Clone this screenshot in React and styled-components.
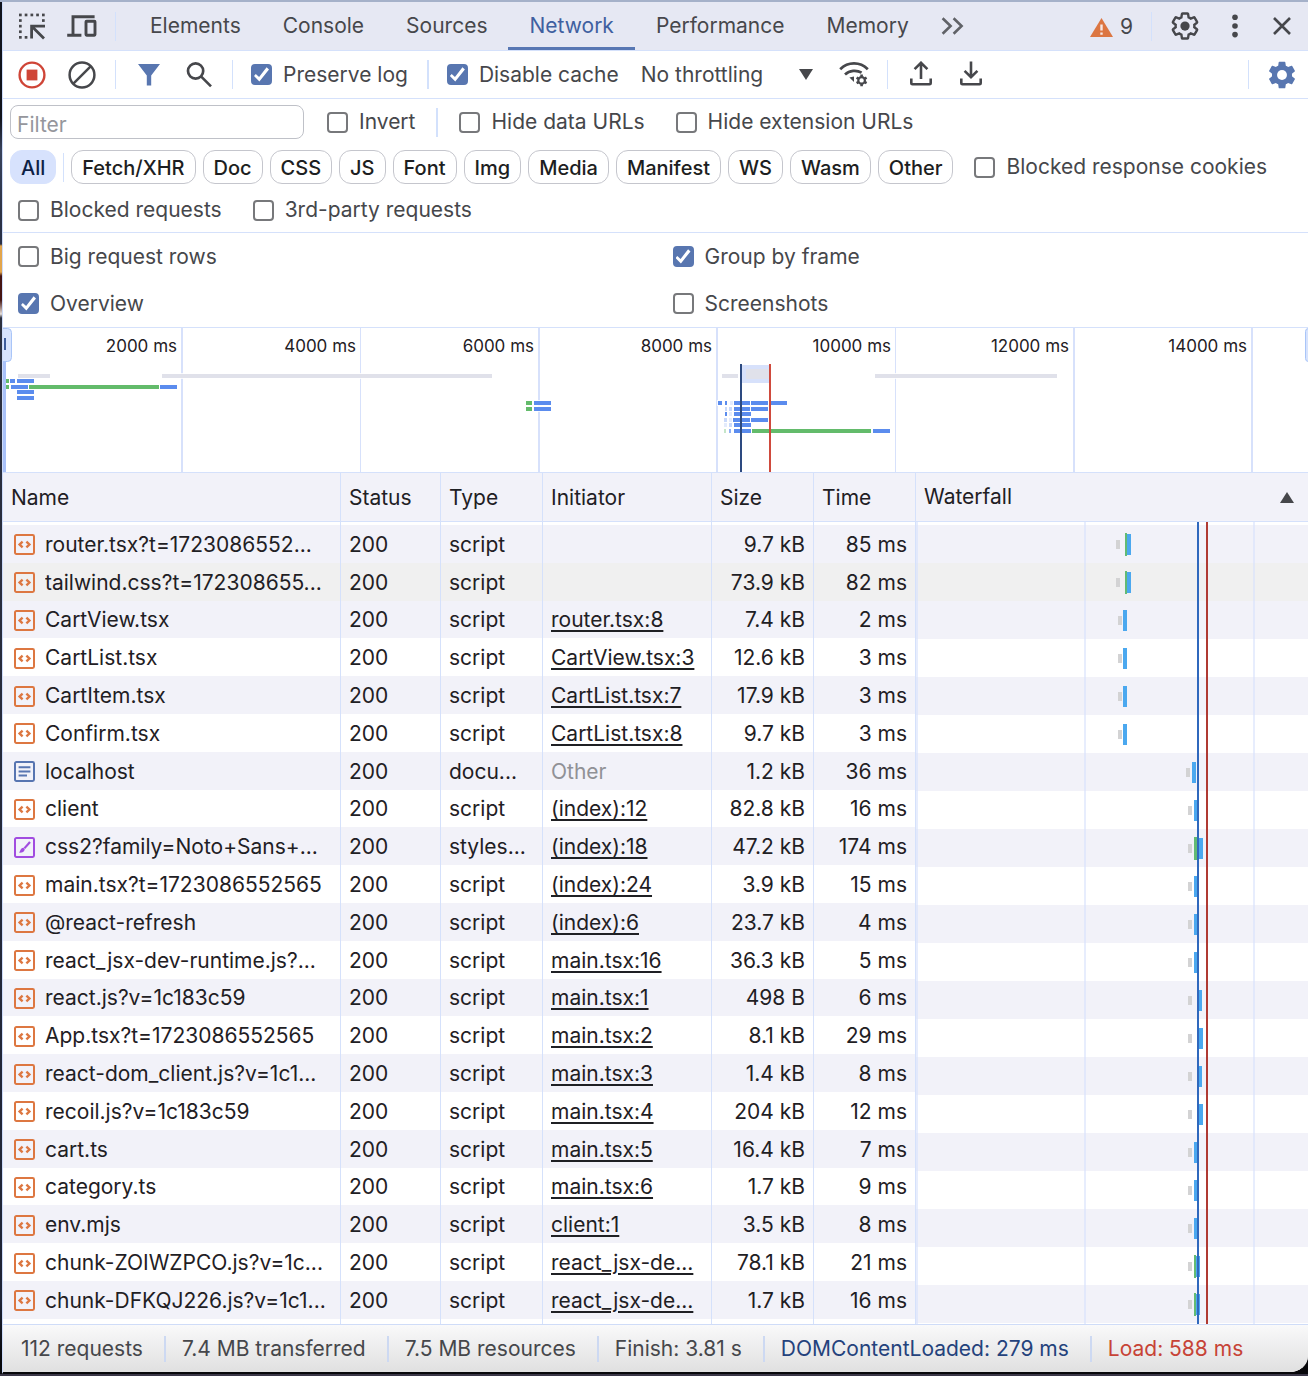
import { useState } from "react";
import styled, { createGlobalStyle } from "styled-components";

const GlobalStyle = createGlobalStyle`
  *, *::before, *::after {
    box-sizing: border-box;
  }
  body {
    margin: 0;
    background: #3a3647;
    font-family: Inter, "Liberation Sans", sans-serif;
    font-size: 21px;
    line-height: 26px;
    color: #46474b;
  }
  button, input, select {
    font: inherit;
    color: inherit;
  }
`;

/* ---------- frame ---------- */

const Desktop = styled.div`
  display: flex;
  flex-direction: column;
  min-height: 100vh;
  padding: 2px 0 2px 2px;
  background: linear-gradient(
    #11131c 0 118px,
    #39435c 150px,
    #2a3146 215px,
    #2a3146 244px,
    #e2a54c 246px 272px,
    #451512 276px 300px,
    #e8e0da 314px,
    #2c3040 318px,
    #1f2436 1300px,
    #07070a 1360px
  );
  box-shadow: inset 0 2px #a5b1c9, inset 0 -2px #3a3647;
`;

const Panel = styled.main`
  flex: 1;
  display: flex;
  flex-direction: column;
  overflow: hidden;
  background: #fff;
  border-left: 1px solid #cddbfa;
  border-bottom: 2px solid #07070a;
  border-bottom-right-radius: 18px;
`;

const Bar = styled.div`
  display: flex;
  align-items: center;
  flex: none;
  border-bottom: 1px solid #d5e1fb;
`;

const Separator = styled.span`
  flex: none;
  width: ${(props) => (props.$wide ? 2 : 1)}px;
  height: 29px;
  margin-left: ${(props) => props.$before || 0}px;
  margin-right: ${(props) => props.$after || 0}px;
  background: #d3e1fc;
`;

const Spacer = styled.span`
  flex: 1;
`;

const IconButton = styled.button`
  flex: none;
  display: flex;
  align-items: center;
  justify-content: center;
  width: ${(props) => props.$width || 50}px;
  height: 44px;
  padding: 0;
  border: 0;
  background: none;
  color: ${(props) => props.$color || "#46474b"};
`;

/* ---------- tab bar ---------- */

const TabBar = styled(Bar)`
  height: 49px;
  padding: 0 4px;
  background: #e6e8f3;
`;

const Tabs = styled.nav`
  display: flex;
  align-self: stretch;
`;

const Tab = styled.button`
  height: 48px;
  padding: 3px 21px 0;
  border: 0;
  border-bottom: 3px solid ${(props) => (props.$active ? "#5877b3" : "transparent")};
  background: none;
  color: ${(props) => (props.$active ? "#3f60a0" : "inherit")};
`;

const Issues = styled.button`
  display: flex;
  align-items: center;
  gap: 7px;
  padding: 2px 0 0;
  border: 0;
  background: none;
`;

/* ---------- toolbar and filters ---------- */

const Toolbar = styled(Bar)`
  height: 48px;
  padding: 0 4px;
`;

const CheckLabel = styled.label`
  display: inline-flex;
  align-items: center;
  gap: 11px;
  white-space: nowrap;
`;

const CheckBox = styled.input.attrs({ type: "checkbox" })`
  appearance: none;
  flex: none;
  display: grid;
  place-items: center;
  width: 21px;
  height: 21px;
  margin: 0;
  border: 2px solid #77787b;
  border-radius: 4px;
  background: #fff;

  &:checked {
    border-color: #5876b0;
    background: #5876b0;
  }

  &:checked::before {
    content: "";
    width: 15px;
    height: 15px;
    background: #fff;
    clip-path: polygon(12% 46%, 0 60%, 36% 96%, 100% 16%, 84% 2%, 34% 66%);
  }
`;

const Throttling = styled.span`
  position: relative;
  display: flex;
  width: 172px;
  margin: 0 9px 0 22px;

  svg {
    position: absolute;
    right: 0;
    top: 7px;
    pointer-events: none;
  }
`;

const Select = styled.select`
  appearance: none;
  width: 100%;
  padding: 0;
  border: 0;
  background: none;
`;

const FilterPane = styled.section`
  flex: none;
  display: flex;
  flex-direction: column;
  gap: 11px;
  padding: 6px 7px 7px;
  border-bottom: 1px solid #d5e1fb;
`;

const FilterRow = styled.div`
  display: flex;
  align-items: center;
  gap: 21px;
`;

const CheckGroup = styled.div`
  display: flex;
  align-items: center;
  gap: 31px;
  height: 30px;
  padding-left: ${(props) => props.$indent || 0}px;
`;

const FilterInput = styled.input`
  width: 294px;
  height: 34px;
  margin-right: 2px;
  padding: 4px 6px 0;
  border: 1px solid #bfc1c8;
  border-radius: 8px;
  outline: 0;
  background: #fff;

  &::placeholder {
    color: #95969c;
    opacity: 1;
  }
`;

const Chips = styled.div`
  display: flex;
  align-items: center;
  gap: 7px;
`;

const Chip = styled.button`
  height: 34px;
  padding: 2px 10px 0;
  border: 1px solid ${(props) => (props.$active ? "#d7e2fd" : "#c5c6cd")};
  border-radius: 12px;
  background: ${(props) => (props.$active ? "#d7e2fd" : "#fff")};
  color: ${(props) => (props.$active ? "#0d1f45" : "#1d1e21")};
  font-size: 20px;
  font-weight: 500;
`;

const SettingsPane = styled.section`
  flex: none;
  display: grid;
  grid-template-columns: 1fr 1fr;
  grid-auto-rows: 47px;
  column-gap: 4px;
  border-bottom: 1px solid #d5e1fb;

  label {
    padding-left: 15px;
  }
`;

/* ---------- overview ---------- */

const Overview = styled.svg`
  flex: none;
  display: block;
  width: 100%;
  height: 145px;
  border-bottom: 1px solid #d5e1fb;

  text {
    font-size: 17px;
    fill: #1f2024;
    text-anchor: end;
  }
`;

/* ---------- request grid ---------- */

const Grid = styled.section`
  flex: 1;
  display: flex;
`;

const TablePane = styled.div`
  flex: 1;
  min-width: 0;
`;

const Table = styled.table`
  width: 100%;
  height: 100%;
  table-layout: fixed;
  border-collapse: separate;
  border-spacing: 0;
  color: #1f2024;
`;

const HeadCell = styled.th`
  height: 49px;
  padding: 2px 8px 0;
  border-right: 1px solid #d5e1fb;
  border-bottom: 1px solid #d5e1fb;
  background: #f2f2f9;
  font-weight: 400;
  text-align: left;
`;

const Row = styled.tr`
  background: ${(props) =>
    props.$hovered ? "#f0f0f0" : props.$striped ? "#f2f2f9" : "#fff"};
`;

const Filler = styled.tr`
  height: ${(props) => props.$height}px;

  td {
    padding: 0;
  }
`;

const Cell = styled.td`
  padding: 2px 8px 0;
  border-right: 1px solid #d5e1fb;
  overflow: hidden;
  text-overflow: ellipsis;
  white-space: nowrap;
  text-align: ${(props) => (props.$numeric ? "right" : "left")};
  color: ${(props) => (props.$muted ? "#909196" : "inherit")};

  a {
    color: inherit;
    text-decoration-thickness: 2px;
    text-underline-offset: 3px;
  }
`;

const FileName = styled.div`
  display: flex;
  align-items: center;
  gap: 10px;
  padding-left: 3px;

  svg {
    flex: none;
  }

  span {
    overflow: hidden;
    text-overflow: ellipsis;
  }
`;

const WaterfallPane = styled.div`
  flex: 0 0 392px;
  display: flex;
  flex-direction: column;
`;

const WaterfallHead = styled.button`
  display: flex;
  align-items: center;
  justify-content: space-between;
  height: 49px;
  padding: 0 14px 0 8px;
  border: 0;
  border-bottom: 1px solid #d5e1fb;
  background: #f2f2f9;
  color: #1f2024;
`;

const WaterfallChart = styled.svg`
  display: block;
  width: 100%;
  height: 802px;
`;

/* ---------- status bar ---------- */

const StatusBar = styled.footer`
  flex: none;
  display: flex;
  align-items: center;
  height: 48px;
  padding-left: 2px;
  border-top: 1px solid #cfdcf8;
  background: linear-gradient(#f9f9fa, #e0e0e0);
`;

const StatusItem = styled.span`
  padding: 0 21px 0 16px;
  white-space: nowrap;
  color: ${(props) => props.$color || "inherit"};

  & + & {
    border-left: 2px solid #cdd9f2;
  }
`;

/* ---------- icons ---------- */

const GEAR =
  "M19.43 12.98c.04-.32.07-.64.07-.98 0-.34-.03-.66-.07-.98l2.11-1.65c.19-.15.24-.42.12-.64l-2-3.46a.5.5 0 0 0-.61-.22l-2.49 1c-.52-.4-1.08-.73-1.69-.98l-.38-2.65A.488.488 0 0 0 14 2h-4c-.25 0-.46.18-.49.42l-.38 2.65c-.61.25-1.17.59-1.69.98l-2.49-1a.566.566 0 0 0-.18-.03c-.17 0-.34.09-.43.25l-2 3.46c-.13.22-.07.49.12.64l2.11 1.65c-.04.32-.07.65-.07.98 0 .33.03.66.07.98l-2.11 1.65c-.19.15-.24.42-.12.64l2 3.46a.5.5 0 0 0 .61.22l2.49-1c.52.4 1.08.73 1.69.98l.38 2.65c.03.24.24.42.49.42h4c.25 0 .46-.18.49-.42l.38-2.65c.61-.25 1.17-.59 1.69-.98l2.49 1c.06.02.12.03.18.03.17 0 .34-.09.43-.25l2-3.46c.12-.22.07-.49-.12-.64z";

const INSPECT_DOTS = [
  [1, 1.6], [6.7, 1.6], [12.5, 1.6], [18.2, 1.6], [24, 1.6],
  [1, 7.2], [1, 12.8], [1, 18.4], [1, 24], [6.7, 24], [24, 7.2],
];

const InspectIcon = () => (
  <svg width="28" height="28" fill="currentColor">
    {INSPECT_DOTS.map(([x, y]) => (
      <rect key={`${x}-${y}`} x={x} y={y} width="2.7" height="2.7" />
    ))}
    <path
      d="M27 14.2H13.6V26.5M14 14.6L26 26.4"
      fill="none"
      stroke="currentColor"
      strokeWidth="2.8"
    />
  </svg>
);

const DevicesIcon = () => (
  <svg width="32" height="28" fill="none" stroke="currentColor" strokeWidth="2.9">
    <path d="M7 23V4.8H28.6M1.2 23.2H15.4" />
    <rect x="20" y="9.2" width="9" height="14" rx="0.6" />
  </svg>
);

const RecordIcon = () => (
  <svg width="28" height="28">
    <circle cx="14" cy="14" r="12.4" fill="none" stroke="#cf4537" strokeWidth="2.4" />
    <rect x="8.6" y="8.6" width="10.8" height="10.8" fill="#cf4537" />
  </svg>
);

const ClearIcon = () => (
  <svg width="28" height="28" fill="none" stroke="currentColor" strokeWidth="2.5">
    <circle cx="14" cy="14" r="12.4" />
    <path d="M5.4 22.6L22.6 5.4" />
  </svg>
);

const FilterIcon = () => (
  <svg width="22" height="22" fill="currentColor">
    <path d="M0 0H22L13.2 11.4V21.6H8.8V11.4Z" />
  </svg>
);

const SearchIcon = () => (
  <svg width="26" height="26" fill="none" stroke="currentColor" strokeWidth="2.7">
    <circle cx="9.6" cy="9" r="7.6" />
    <path d="M15 14.4L25 24.4" />
  </svg>
);

const MoreTabsIcon = () => (
  <svg width="24" height="18" fill="none" stroke="#606267" strokeWidth="2.6">
    <path d="M1.6 1.2L9.6 9L1.6 16.8M12.6 1.2L20.6 9L12.6 16.8" />
  </svg>
);

const WarningIcon = () => (
  <svg width="23" height="19">
    <path d="M11.5 0L23 19H0Z" fill="#dc7642" />
    <path d="M11.5 6.6V12.6M11.5 14.4V16.8" stroke="#f6e9e6" strokeWidth="2.4" />
  </svg>
);

const SettingsIcon = () => (
  <svg width="30" height="30" viewBox="0 0 24 24">
    <path d={GEAR} fill="none" stroke="currentColor" strokeWidth="1.9" />
    <circle cx="12" cy="12" r="3.7" fill="currentColor" />
  </svg>
);

const SettingsFilledIcon = () => (
  <svg width="32" height="32" viewBox="0 0 24 24">
    <path d={GEAR} fill="currentColor" />
    <circle cx="12" cy="12" r="3.7" fill="#fff" />
  </svg>
);

const KebabIcon = () => (
  <svg width="6" height="24" fill="currentColor">
    <circle cx="3" cy="3.2" r="2.8" />
    <circle cx="3" cy="12" r="2.8" />
    <circle cx="3" cy="20.6" r="2.8" />
  </svg>
);

const CloseIcon = () => (
  <svg width="18" height="18" stroke="currentColor" strokeWidth="2.6">
    <path d="M1 1L17 17M17 1L1 17" />
  </svg>
);

const NetworkConditionsIcon = () => (
  <svg width="30" height="28" fill="none" stroke="currentColor" strokeWidth="2.7">
    <path d="M1.2 8.2C9 0.4 21 0.4 28.8 8.2" />
    <path d="M6 13.6C10.6 9.2 17.6 8.8 22.6 11.6" />
    <path d="M10.4 16.4L15 15.4V21Z" fill="currentColor" stroke="none" />
    <circle cx="22.6" cy="19.4" r="3.3" strokeWidth="2.2" />
    <path
      d="M22.6 13.6V15.8M22.6 23V25.2M17.6 16.6L19.4 17.6M25.8 21.2L27.6 22.2M17.6 22.2L19.4 21.2M25.8 17.6L27.6 16.6"
      strokeWidth="2.6"
    />
  </svg>
);

const TransferIcon = ({ down }) => (
  <svg width="22" height="27" fill="none" stroke="currentColor" strokeWidth="2.6">
    <path d="M1.3 17.6V22.2Q1.3 23.3 2.4 23.3H19.6Q20.7 23.3 20.7 22.2V17.6" />
    {down ? (
      <path d="M11 0.5V16M4.6 9.8L11 16.2L17.4 9.8" />
    ) : (
      <path d="M11 18V2M4.6 8.2L11 1.8L17.4 8.2" />
    )}
  </svg>
);

const FILE_COLORS = { script: "#dd7741", document: "#5775b1", stylesheet: "#a14ce0" };

const FileIcon = ({ type }) => (
  <svg width="21" height="21" fill="none" stroke={FILE_COLORS[type]} strokeWidth="2">
    <rect x="1" y="1" width="19" height="19" rx="1.4" />
    {type === "script" && (
      <path d="M8.6 7.6L5.6 10.5L8.6 13.4M12.4 7.6L15.4 10.5L12.4 13.4" strokeWidth="2.4" />
    )}
    {type === "document" && <path d="M4.6 6.2H16.4M4.6 10.4H16.4M4.6 14.6H13" />}
    {type === "stylesheet" && (
      <>
        <path d="M16 5L10.4 11.4" strokeWidth="2.2" />
        <path
          d="M9.4 10.8L10.8 12.2C10.4 15 8 15.8 5 15.6C6.4 14.6 6 11.4 9.4 10.8Z"
          fill={FILE_COLORS.stylesheet}
          stroke="none"
        />
      </>
    )}
  </svg>
);

/* ---------- data ---------- */

const TABS = ["Elements", "Console", "Sources", "Network", "Performance", "Memory"];

const TYPES = [
  "Fetch/XHR", "Doc", "CSS", "JS", "Font", "Img",
  "Media", "Manifest", "WS", "Wasm", "Other",
];

// bar shapes in the waterfall: queueing, waiting (green) and download (blue)
const early = { queue: 200, green: [209, 2], blue: [211, 4] };
const cached = { queue: 202, blue: [207, 4] };
const late = { queue: 272, blue: [278, 4] };
const afterDcl = { queue: 272, blue: [281, 5] };
const afterDclWait = { queue: 272, green: [281, 2], blue: [283, 4] };
const chunk = { queue: 272, green: [278, 2], blue: [280, 4] };

const REQUESTS = [
  ["router.tsx?t=1723086552...", "script", "", "9.7 kB", "85 ms", early],
  ["tailwind.css?t=172308655...", "script", "", "73.9 kB", "82 ms", early],
  ["CartView.tsx", "script", "router.tsx:8", "7.4 kB", "2 ms", cached],
  ["CartList.tsx", "script", "CartView.tsx:3", "12.6 kB", "3 ms", cached],
  ["CartItem.tsx", "script", "CartList.tsx:7", "17.9 kB", "3 ms", cached],
  ["Confirm.tsx", "script", "CartList.tsx:8", "9.7 kB", "3 ms", cached],
  ["localhost", "document", "Other", "1.2 kB", "36 ms", { queue: 270, blue: [276, 4] }],
  ["client", "script", "(index):12", "82.8 kB", "16 ms", late],
  ["css2?family=Noto+Sans+...", "stylesheet", "(index):18", "47.2 kB", "174 ms", { queue: 272, green: [278, 5], blue: [283, 4] }],
  ["main.tsx?t=1723086552565", "script", "(index):24", "3.9 kB", "15 ms", late],
  ["@react-refresh", "script", "(index):6", "23.7 kB", "4 ms", late],
  ["react_jsx-dev-runtime.js?...", "script", "main.tsx:16", "36.3 kB", "5 ms", late],
  ["react.js?v=1c183c59", "script", "main.tsx:1", "498 B", "6 ms", afterDcl],
  ["App.tsx?t=1723086552565", "script", "main.tsx:2", "8.1 kB", "29 ms", afterDclWait],
  ["react-dom_client.js?v=1c1...", "script", "main.tsx:3", "1.4 kB", "8 ms", afterDcl],
  ["recoil.js?v=1c183c59", "script", "main.tsx:4", "204 kB", "12 ms", afterDclWait],
  ["cart.ts", "script", "main.tsx:5", "16.4 kB", "7 ms", late],
  ["category.ts", "script", "main.tsx:6", "1.7 kB", "9 ms", late],
  ["env.mjs", "script", "client:1", "3.5 kB", "8 ms", late],
  ["chunk-ZOIWZPCO.js?v=1c...", "script", "react_jsx-de...", "78.1 kB", "21 ms", chunk],
  ["chunk-DFKQJ226.js?v=1c1...", "script", "react_jsx-de...", "1.7 kB", "16 ms", chunk],
];

const TYPE_LABELS = { script: "script", document: "docu...", stylesheet: "styles..." };

const HOVERED = 1;

// overview bars: [x, y, width, color]
const GREY = "#e0e1ea";
const BLUE = "#5b8cee";
const PALE = "#c9d9fa";
const PALER = "#e3ebfc";
const GREEN = "#63bb6b";
const OVERVIEW_BARS = [
  [15, 46, 32, GREY], [159, 46, 330, GREY], [719, 46, 16, GREY], [872, 46, 182, GREY],
  [3, 51, 3, GREEN], [7, 51, 5, BLUE], [14, 51, 17, BLUE],
  [3, 57, 3, GREEN], [8, 57, 17, BLUE], [26, 57, 130, GREEN], [157, 57, 17, BLUE],
  [14, 62, 17, BLUE], [14, 68, 17, BLUE],
  [523, 73, 6, GREEN], [531, 73, 17, BLUE], [523, 79, 6, GREEN], [531, 79, 17, BLUE],
  [715, 73, 4, BLUE], [722, 73, 2, BLUE], [727, 73, 3, PALER],
  [731, 73, 16, BLUE], [748, 73, 17, BLUE], [767, 73, 17, BLUE],
  [722, 79, 2, PALE], [726, 79, 3, PALE], [731, 79, 16, BLUE], [748, 79, 17, BLUE],
  [722, 84, 2, BLUE], [726, 84, 3, PALER], [731, 84, 17, BLUE],
  [721, 90, 3, PALE], [726, 90, 3, PALER], [730, 90, 17, BLUE], [748, 90, 17, BLUE],
  [721, 95, 3, PALER], [726, 95, 3, PALE], [731, 95, 17, BLUE],
  [721, 101, 2, "#c5e6c9"], [726, 101, 2, "#8fb0f4"], [731, 101, 17, BLUE],
  [749, 101, 119, GREEN], [870, 101, 17, BLUE],
];

const TICKS = [2000, 4000, 6000, 8000, 10000, 12000, 14000];
const TICK_WIDTH = 178.3;

/* ---------- components ---------- */

const Check = ({ label, initial = false }) => {
  const [checked, setChecked] = useState(initial);
  return (
    <CheckLabel>
      <CheckBox checked={checked} onChange={() => setChecked(!checked)} />
      {label}
    </CheckLabel>
  );
};

const OverviewTimeline = () => (
  <Overview role="img" aria-label="Overview">
    {TICKS.map((ms, i) => {
      const x = Math.round((i + 1) * TICK_WIDTH);
      return (
        <g key={ms}>
          <rect x={x} y="0" width={i === 1 || i === 4 ? 1 : 2} height="144" fill="#d7e1fb" />
          <text x={x - 4} y="24">{ms} ms</text>
        </g>
      );
    })}
    <rect x="739" y="37" width="29" height="18" fill="#d7e1fb" />
    <rect x="743" y="41" width="24" height="10" fill="#e0e1ea" />
    {OVERVIEW_BARS.map(([x, y, width, color]) => (
      <g key={`${x}-${y}`}>
        <rect x={x - 1} y={y - 1} width={width + 2} height="6" fill="#fff" opacity="0.8" />
        <rect x={x} y={y} width={width} height="4" fill={color} />
      </g>
    ))}
    <rect x="737" y="36" width="2" height="108" fill="#2d4a80" />
    <rect x="766" y="36" width="2" height="108" fill="#cf4a3d" />
    <rect x="0" y="32" width="3" height="112" fill="#a9c1f8" />
    <rect x="-6" y="0.5" width="14.5" height="33" rx="4" fill="#d7e3fd" stroke="#a9c5f8" />
    <rect x="1" y="10" width="2" height="12" fill="#3d5c9c" />
    <svg x="100%" overflow="visible">
      <rect x="-2.5" y="0.5" width="12" height="33" rx="3" fill="#d7e3fd" stroke="#a9c5f8" />
    </svg>
  </Overview>
);

const Waterfall = () => (
  <WaterfallPane>
    <WaterfallHead>
      Waterfall
      <svg width="14" height="11">
        <path d="M7 0L14 11H0Z" fill="#46474b" />
      </svg>
    </WaterfallHead>
    <WaterfallChart role="img" aria-label="Waterfall">
      {REQUESTS.map(([name], i) => (
        <rect
          key={name}
          x="0"
          y={3 + i * 38}
          width="100%"
          height="38"
          fill={i === HOVERED ? "#f0f0f0" : i % 2 === 0 ? "#f2f2f9" : "#fff"}
        />
      ))}
      {[0, 168, 337].map((x) => (
        <rect key={x} x={x} y="0" width="2" height="802" fill="#d7e1fb" opacity="0.6" />
      ))}
      {REQUESTS.map(([name, , , , , bar], i) => {
        const y = 3 + i * 38;
        return (
          <g key={name}>
            <rect x={bar.queue} y={y + 15} width="4" height="9" fill="#d3d3d4" />
            <rect x={bar.blue[0]} y={y + 9} width={bar.blue[1]} height="21" fill="#4ba8ef" />
            {bar.green && (
              <rect x={bar.green[0]} y={y + 8} width={bar.green[1]} height="23" fill="#62bb74" />
            )}
          </g>
        );
      })}
      <rect x="281" y="0" width="2" height="802" fill="#2f68bd" />
      <rect x="290" y="0" width="2" height="802" fill="#b03a33" />
    </WaterfallChart>
  </WaterfallPane>
);

const FillerRow = ({ height }) => (
  <Filler $height={height} aria-hidden="true">
    {[1, 2, 3, 4, 5, 6].map((n) => (
      <Cell key={n} />
    ))}
  </Filler>
);

const RequestTable = () => (
  <TablePane>
    <Table>
      <colgroup>
        <col />
        <col width="100" />
        <col width="102" />
        <col width="169" />
        <col width="102" />
        <col width="102" />
      </colgroup>
      <thead>
        <tr>
          {["Name", "Status", "Type", "Initiator", "Size", "Time"].map((title) => (
            <HeadCell key={title}>{title}</HeadCell>
          ))}
        </tr>
      </thead>
      <tbody>
        <FillerRow height={3} />
        {REQUESTS.map(([name, type, initiator, size, time], i) => (
          <Row key={name} $striped={i % 2 === 0} $hovered={i === HOVERED}>
            <Cell>
              <FileName>
                <FileIcon type={type} />
                <span>{name}</span>
              </FileName>
            </Cell>
            <Cell>200</Cell>
            <Cell>{TYPE_LABELS[type]}</Cell>
            <Cell $muted={initiator === "Other"}>
              {initiator && initiator !== "Other" ? <a href="#source">{initiator}</a> : initiator}
            </Cell>
            <Cell $numeric>{size}</Cell>
            <Cell $numeric>{time}</Cell>
          </Row>
        ))}
        <FillerRow height={5} />
      </tbody>
    </Table>
  </TablePane>
);

const App = () => {
  const [activeType, setActiveType] = useState("All");

  return (
    <Desktop>
      <GlobalStyle />
      <Panel>
        <TabBar>
          <IconButton aria-label="Inspect element"><InspectIcon /></IconButton>
          <IconButton aria-label="Toggle device toolbar"><DevicesIcon /></IconButton>
          <Separator $before={8} $after={13} />
          <Tabs>
            {TABS.map((tab) => (
              <Tab key={tab} $active={tab === "Network"}>{tab}</Tab>
            ))}
          </Tabs>
          <IconButton aria-label="More tabs" $width={46}><MoreTabsIcon /></IconButton>
          <Spacer />
          <Issues aria-label="9 warnings"><WarningIcon />9</Issues>
          <Separator $before={18} $after={8} />
          <IconButton aria-label="Settings"><SettingsIcon /></IconButton>
          <IconButton aria-label="Customize"><KebabIcon /></IconButton>
          <IconButton aria-label="Close" $width={44}><CloseIcon /></IconButton>
        </TabBar>

        <Toolbar>
          <IconButton aria-label="Stop recording"><RecordIcon /></IconButton>
          <IconButton aria-label="Clear"><ClearIcon /></IconButton>
          <Separator $before={8} $after={8} />
          <IconButton aria-label="Filter" $color="#5876b0"><FilterIcon /></IconButton>
          <IconButton aria-label="Search"><SearchIcon /></IconButton>
          <Separator $before={8} $after={18} />
          <Check label="Preserve log" initial />
          <Separator $wide $before={19} $after={18} />
          <Check label="Disable cache" initial />
          <Throttling>
            <Select aria-label="Throttling" defaultValue="No throttling">
              <option>No throttling</option>
              <option>Fast 3G</option>
              <option>Slow 3G</option>
              <option>Offline</option>
            </Select>
            <svg width="14" height="11">
              <path d="M0 0H14L7 11Z" fill="#46474b" />
            </svg>
          </Throttling>
          <IconButton aria-label="Network conditions" $width={65}><NetworkConditionsIcon /></IconButton>
          <Separator $after={8} />
          <IconButton aria-label="Import HAR"><TransferIcon /></IconButton>
          <IconButton aria-label="Export HAR"><TransferIcon down /></IconButton>
          <Spacer />
          <Separator $after={11} />
          <IconButton aria-label="Network settings" $color="#5876b0" $width={44}>
            <SettingsFilledIcon />
          </IconButton>
        </Toolbar>

        <FilterPane>
          <FilterRow>
            <FilterInput placeholder="Filter" aria-label="Filter" />
            <Check label="Invert" />
            <Separator $wide />
            <CheckGroup>
              <Check label="Hide data URLs" />
              <Check label="Hide extension URLs" />
            </CheckGroup>
          </FilterRow>
          <FilterRow>
            <Chips>
              <Chip $active={activeType === "All"} onClick={() => setActiveType("All")}>All</Chip>
              <Separator />
              {TYPES.map((type) => (
                <Chip
                  key={type}
                  $active={activeType === type}
                  onClick={() => setActiveType(type)}
                >
                  {type}
                </Chip>
              ))}
            </Chips>
            <Check label="Blocked response cookies" />
          </FilterRow>
          <CheckGroup $indent={8}>
            <Check label="Blocked requests" />
            <Check label="3rd-party requests" />
          </CheckGroup>
        </FilterPane>

        <SettingsPane>
          <Check label="Big request rows" />
          <Check label="Group by frame" initial />
          <Check label="Overview" initial />
          <Check label="Screenshots" />
        </SettingsPane>

        <OverviewTimeline />

        <Grid>
          <RequestTable />
          <Waterfall />
        </Grid>

        <StatusBar>
          <StatusItem>112 requests</StatusItem>
          <StatusItem>7.4 MB transferred</StatusItem>
          <StatusItem>7.5 MB resources</StatusItem>
          <StatusItem>Finish: 3.81 s</StatusItem>
          <StatusItem $color="#24427c">DOMContentLoaded: 279 ms</StatusItem>
          <StatusItem $color="#c74336">Load: 588 ms</StatusItem>
        </StatusBar>
      </Panel>
    </Desktop>
  );
};

export default App;
